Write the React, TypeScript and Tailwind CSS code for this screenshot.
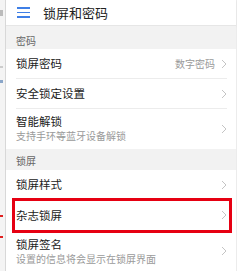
const Chevron = () => (
  <svg width="6" height="10" viewBox="0 0 6 10" className="shrink-0">
    <path d="M1 1l4 4-4 4" fill="none" stroke="#c4c4c4" strokeWidth="1" />
  </svg>
);

const Section = ({ label, className }: { label: string; className: string }) => (
  <div className={`bg-[#f2f2f2] px-[10px] text-[10px] leading-[12px] text-[#666] ${className}`}>
    {label}
  </div>
);

const Row = ({
  title,
  sub,
  value,
  className,
  divider = true,
  children,
}: {
  title: string;
  sub?: string;
  value?: string;
  className: string;
  divider?: boolean;
  children?: React.ReactNode;
}) => (
  <div className={`relative flex items-center pl-[10px] pr-[9px] ${className}`}>
    <div className={`flex h-full flex-1 items-center ${divider ? "border-b border-[#ececec]" : ""}`}>
      <div className="flex flex-1 flex-col">
        <span className="text-[11.5px] leading-[13px] text-[#222]">{title}</span>
        {sub && <span className="mt-[2px] text-[10px] leading-[12px] text-[#9a9a9a]">{sub}</span>}
      </div>
      {value && <span className="mr-[6px] text-[10px] text-[#9a9a9a]">{value}</span>}
      <Chevron />
    </div>
    {children}
  </div>
);

export default function App() {
  return (
    <div
      className="flex h-[271px] w-[241px] overflow-hidden bg-white"
      style={{ fontFamily: '"Noto Sans CJK SC", "Noto Sans", sans-serif' }}
    >
      {/* edge of the previous screen */}
      <div className="relative w-[6px] shrink-0 border-r border-[#d8d8d8] bg-[#f4f4f4]">
        <div className="absolute left-0 top-[10px] h-[6px] w-[3px] bg-[#bbb]" />
        <div className="absolute left-0 top-[66px] h-[2px] w-[3px] bg-[#ccc]" />
        <div className="absolute left-0 top-[80px] h-[3px] w-[3px] bg-[#8aa6c8]" />
        <div className="absolute left-0 top-[215px] h-[2px] w-[3px] bg-[#e02020]" />
        <div className="absolute left-0 top-[236px] h-[2px] w-[3px] bg-[#e02020]" />
      </div>

      <div className="flex w-[231px] shrink-0 flex-col border-r border-[#ececec]">
        <div className="flex h-[26px] shrink-0 items-center border-b border-[#e6e6e6] bg-white shadow-[0_1px_2px_rgba(0,0,0,0.06)]">
          <div className="ml-[11px] flex w-[13px] flex-col gap-[3px]">
            <span className="h-[1.5px] bg-[#3f7fe6]" />
            <span className="h-[1.5px] bg-[#3f7fe6]" />
            <span className="h-[1.5px] bg-[#3f7fe6]" />
          </div>
          <span className="ml-[13px] text-[13px] leading-[16px] text-[#222]">锁屏和密码</span>
        </div>

        <Section label="密码" className="h-[23px] pt-[9px]" />
        <Row title="锁屏密码" value="数字密码" className="h-[31px]" />
        <Row title="安全锁定设置" className="h-[30px]" />
        <Row title="智能解锁" sub="支持手环等蓝牙设备解锁" className="h-[40px]" divider={false} />
        <Section label="锁屏" className="h-[22px] pt-[6px]" />
        <Row title="锁屏样式" className="h-[30px]" />
        <Row title="杂志锁屏" className="h-[32px]">
          <div className="absolute -top-[2px] bottom-[-1px] left-[6px] right-[4px] border-[3px] border-[#e60012]" />
        </Row>
        <Row title="锁屏签名" sub="设置的信息将会显示在锁屏界面" className="h-[40px]" divider={false} />
      </div>

      <div className="flex-1 bg-white" />
    </div>
  );
}
